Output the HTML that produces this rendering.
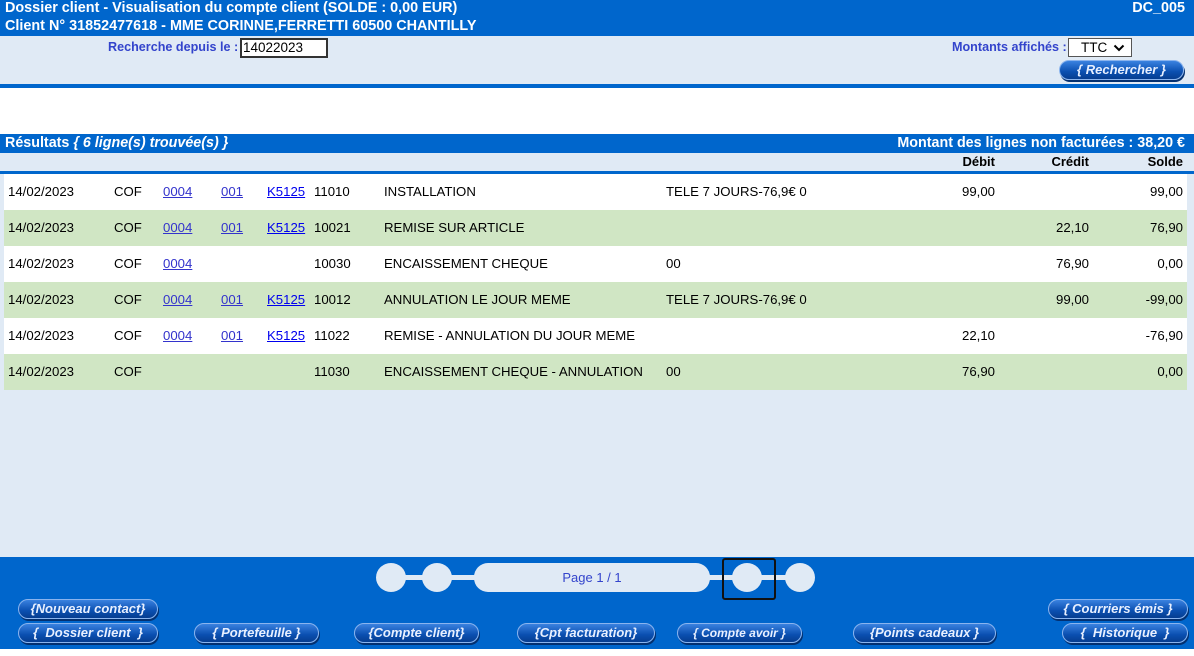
<!DOCTYPE html>
<html><head><meta charset="utf-8"><style>
*{margin:0;padding:0;box-sizing:border-box}
body{width:1194px;height:656px;position:relative;background:#fff;font-family:"Liberation Sans",Arial,sans-serif;font-size:13.2px;overflow:hidden}
.a{position:absolute}
.hdr{left:0;top:0;width:1194px;height:36px;background:#0066cc;color:#fff;font-weight:bold;font-size:14.4px}
.lab{color:#3344cc;font-weight:bold;font-size:12.6px}
.btn{position:absolute;height:20px;border-radius:10px;background:linear-gradient(#3a82e0,#0a4fb0 60%,#063d90);border:1px solid #8ab4ee;box-shadow:1px 2px 0 #033070;color:#e8f0ff;font-style:italic;font-weight:bold;font-size:13px;text-align:center;line-height:18px;white-space:pre}
.row{position:absolute;left:4px;width:1183px;height:36px;line-height:36px}
.row span{position:absolute;top:0}
.g{background:#d0e6c4}.w{background:#fff}
.u{color:#3333cc;text-decoration:underline}
.r{text-align:right}
.c{position:absolute;border-radius:50%;background:#e0eaf5;width:30px;height:30px}
</style></head><body>
<div class="a hdr"><div class="a" style="left:5px;top:0">Dossier client - Visualisation du compte client (SOLDE : 0,00 EUR)</div><div class="a" style="left:5px;top:18px">Client N° 31852477618 - MME CORINNE,FERRETTI 60500 CHANTILLY</div><div class="a" style="right:9px;top:0">DC_005</div></div>
<div class="a" style="left:0;top:36px;width:1194px;height:48px;background:#e0eaf5"></div>
<div class="a" style="left:0;top:84px;width:1194px;height:4px;background:#0066cc"></div>
<div class="a lab" style="left:108px;top:40px">Recherche depuis le :</div>
<div class="a" style="left:240px;top:38px;width:88px;height:20px;border:2px solid #333;background:#fff;font-size:13.5px;padding-left:1px;line-height:16px">14022023</div>
<div class="a lab" style="left:952px;top:40px">Montants affichés :</div>
<div class="a" style="left:1068px;top:38px;width:64px;height:19px;border:1px solid #555;background:#fff;font-size:13.5px;padding-left:12px;line-height:17px">TTC <svg width="12" height="8" viewBox="0 0 12 8" style="margin-left:2px"><path d="M1.5 1.5 L6 6 L10.5 1.5" stroke="#000" stroke-width="2" fill="none"/></svg></div>
<div class="btn" style="left:1059px;top:60px;width:125px">{ Rechercher }</div>
<div class="a" style="left:0;top:134px;width:1194px;height:19px;background:#0066cc;color:#fff;font-weight:bold;line-height:19px;font-size:14.3px"><span style="position:absolute;left:5px">Résultats <i>{ 6 ligne(s) trouvée(s) }</i></span><span style="position:absolute;right:9px">Montant des lignes non facturées : 38,20 €</span></div>
<div class="a" style="left:0;top:153px;width:1194px;height:18px;background:#e0eaf5;font-weight:bold;font-size:13px;line-height:18px"><span class="a" style="right:199px">Débit</span><span class="a" style="right:105px">Crédit</span><span class="a" style="right:11px">Solde</span></div>
<div class="a" style="left:0;top:171px;width:1194px;height:3px;background:#0066cc"></div>
<div class="a" style="left:0;top:174px;width:1194px;height:383px;background:#e0eaf5"></div>
<div class="row w" style="top:174px"><span style="left:4px">14/02/2023</span><span style="left:110px">COF</span><span class="u" style="left:159px">0004</span><span class="u" style="left:217px">001</span><span class="u" style="left:263px;color:#0000ee">K5125</span><span style="left:310px">11010</span><span style="left:380px">INSTALLATION</span><span style="left:662px">TELE 7 JOURS-76,9€ 0</span><span class="r" style="right:192px">99,00</span><span class="r" style="right:4px">99,00</span></div>
<div class="row g" style="top:210px"><span style="left:4px">14/02/2023</span><span style="left:110px">COF</span><span class="u" style="left:159px">0004</span><span class="u" style="left:217px">001</span><span class="u" style="left:263px;color:#0000ee">K5125</span><span style="left:310px">10021</span><span style="left:380px">REMISE SUR ARTICLE</span><span class="r" style="right:98px">22,10</span><span class="r" style="right:4px">76,90</span></div>
<div class="row w" style="top:246px"><span style="left:4px">14/02/2023</span><span style="left:110px">COF</span><span class="u" style="left:159px">0004</span><span style="left:310px">10030</span><span style="left:380px">ENCAISSEMENT CHEQUE</span><span style="left:662px">00</span><span class="r" style="right:98px">76,90</span><span class="r" style="right:4px">0,00</span></div>
<div class="row g" style="top:282px"><span style="left:4px">14/02/2023</span><span style="left:110px">COF</span><span class="u" style="left:159px">0004</span><span class="u" style="left:217px">001</span><span class="u" style="left:263px;color:#0000ee">K5125</span><span style="left:310px">10012</span><span style="left:380px">ANNULATION LE JOUR MEME</span><span style="left:662px">TELE 7 JOURS-76,9€ 0</span><span class="r" style="right:98px">99,00</span><span class="r" style="right:4px">-99,00</span></div>
<div class="row w" style="top:318px"><span style="left:4px">14/02/2023</span><span style="left:110px">COF</span><span class="u" style="left:159px">0004</span><span class="u" style="left:217px">001</span><span class="u" style="left:263px;color:#0000ee">K5125</span><span style="left:310px">11022</span><span style="left:380px">REMISE - ANNULATION DU JOUR MEME</span><span class="r" style="right:192px">22,10</span><span class="r" style="right:4px">-76,90</span></div>
<div class="row g" style="top:354px"><span style="left:4px">14/02/2023</span><span style="left:110px">COF</span><span style="left:310px">11030</span><span style="left:380px">ENCAISSEMENT CHEQUE - ANNULATION</span><span style="left:662px">00</span><span class="r" style="right:192px">76,90</span><span class="r" style="right:4px">0,00</span></div>
<div class="a" style="left:0;top:557px;width:1194px;height:92px;background:#0066cc"></div>
<div class="a" style="left:390px;top:575px;width:420px;height:5px;background:#e0eaf5"></div>
<div class="c" style="left:376px;top:563px;width:30px;height:29px"></div>
<div class="c" style="left:422px;top:563px;width:30px;height:29px"></div>
<div class="a" style="left:474px;top:563px;width:236px;height:29px;border-radius:14px;background:#e0eaf5;color:#3344cc;text-align:center;line-height:29px;font-size:13px">Page 1 / 1</div>
<div class="a" style="left:722px;top:558px;width:54px;height:42px;border:2px solid #111;border-radius:3px"></div>
<div class="c" style="left:732px;top:563px;width:30px;height:29px"></div>
<div class="c" style="left:785px;top:563px;width:30px;height:29px"></div>
<div class="btn" style="left:18px;top:599px;width:140px">{Nouveau contact}</div>
<div class="btn" style="left:18px;top:623px;width:140px">{  Dossier client  }</div>
<div class="btn" style="left:194px;top:623px;width:125px">{ Portefeuille }</div>
<div class="btn" style="left:354px;top:623px;width:125px">{Compte client}</div>
<div class="btn" style="left:517px;top:623px;width:138px">{Cpt facturation}</div>
<div class="btn" style="left:677px;top:623px;width:125px;font-size:12px">{ Compte avoir }</div>
<div class="btn" style="left:853px;top:623px;width:143px">{Points cadeaux }</div>
<div class="btn" style="left:1048px;top:599px;width:140px">{ Courriers émis }</div>
<div class="btn" style="left:1062px;top:623px;width:126px">{  Historique  }</div>
</body></html>
